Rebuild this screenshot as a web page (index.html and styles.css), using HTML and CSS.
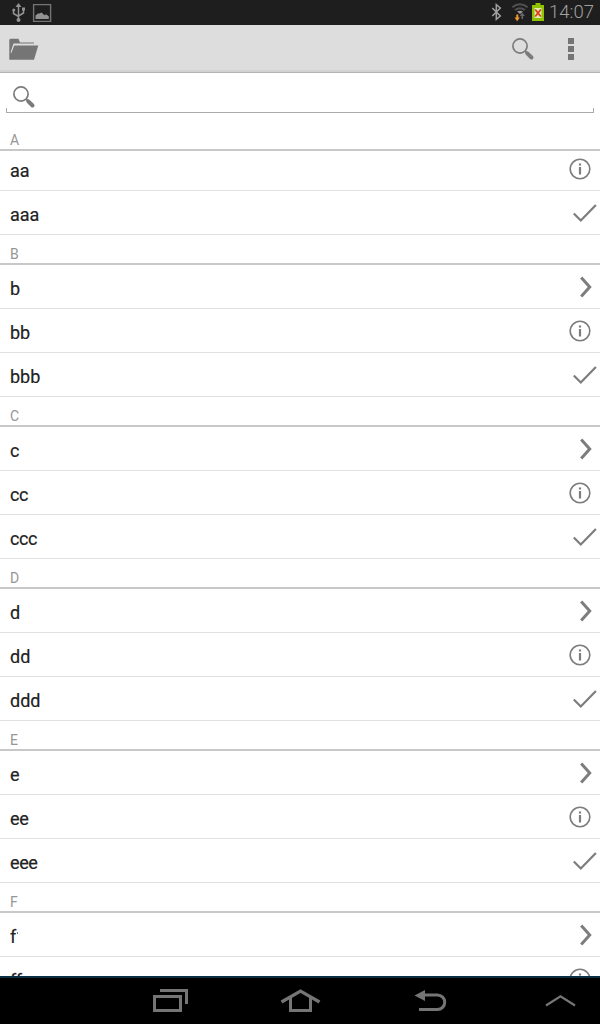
FILE: index.html
```
<!DOCTYPE html>
<html lang="en">
<head>
<meta charset="utf-8">
<title>Contacts list</title>
<link rel="stylesheet" href="styles.css">
</head>
<body>
<svg class="defs" width="0" height="0">
  <symbol id="search" viewBox="0 0 24 24">
    <circle cx="9" cy="9" r="7.1" fill="none" stroke="#7b7b7b" stroke-width="1.7"/>
    <path d="M14 14l2 2" stroke="#7b7b7b" stroke-width="2"/>
    <path d="M16.3 16.3l4.2 4.2" stroke="#7b7b7b" stroke-width="4" stroke-linecap="round"/>
  </symbol>
  <symbol id="info" viewBox="0 0 32 24">
    <circle cx="12" cy="11" r="9.8" fill="none" stroke="#7d7d7d" stroke-width="1.6"/>
    <path d="M12 5.4v2.2M12 9v7.4" stroke="#7d7d7d" stroke-width="2.2"/>
  </symbol>
  <symbol id="check" viewBox="0 0 32 24">
    <path d="M5.800 11.500l7 7L27.900 3" fill="none" stroke="#7d7d7d" stroke-width="2.200"/>
  </symbol>
  <symbol id="chevron" viewBox="0 0 32 24">
    <path d="M13.200 1.600L21.700 11l-8.500 9.500" fill="none" stroke="#7d7d7d" stroke-width="3"/>
  </symbol>
</svg>
<div class="screen">
  <header class="status">
    <svg class="status-left" width="60" height="25" viewBox="0 0 60 25" fill="none" stroke="#929292">
      <path d="M18.500 6v13M13.500 10v3.500l5 3M23.500 9v4l-5 3" stroke-width="1.500"/>
      <path d="M18.500 3l3 4h-6z" fill="#929292" stroke="none"/>
      <circle cx="18.500" cy="20" r="2" fill="#929292" stroke="none"/>
      <circle cx="13.800" cy="10" r="1.500" fill="#929292" stroke="none"/>
      <path d="M22 7.500h3v3h-3z" fill="#929292" stroke="none"/>
      <path d="M33.600 4.600h17v16.800h-17z" stroke="#747474" stroke-width="1.400"/>
      <path d="M35.500 19v-3.500l2.500-2h1.500l2-1 3 2.800 1.500-1 2.800 2V19z" fill="#929292" stroke="none"/>
    </svg>
    <svg class="status-right" width="60" height="25" viewBox="0 0 60 25" fill="none">
      <path d="M4.300 8l8 8-4 3.300V4.700l4 3.300-8 8" stroke="#a0a0a0" stroke-width="1.500"/>
      <path d="M24.300 7.200q7.700-5.700 15.400 0M27 10q5-3.600 10 0" stroke="#505050" stroke-width="2"/>
      <path d="M29 11.500q3-1.700 6 0L32 14z" fill="#999"/>
      <path d="M29.300 14.500V19" stroke="#f19a2c" stroke-width="2"/>
      <path d="M26.500 17.500h5.300L29.200 21.300z" fill="#f19a2c"/>
      <path d="M34.300 19v-4.500" stroke="#666" stroke-width="1.600"/>
      <path d="M31.700 16l2.600-3.500 2.600 3.500z" fill="#666"/>
      <path d="M44 5h3.500V3h5v2H56v16H44z" fill="#8fc200"/>
      <path d="M46.500 8h7v10h-7z" fill="#dfeab5"/>
      <path d="M47.200 9.500l5.600 7M52.800 9.500l-5.600 7" stroke="#e03a16" stroke-width="1.700"/>
    </svg>
    <span class="clock">14:07</span>
  </header>
  <div class="actionbar">
    <svg class="folder" width="30" height="24" viewBox="0 0 30 24">
      <path d="M.3 1.800L1.300.8h8.200l1.500 3.700H25v1H4.500L1.500 14.500l1 .3L5.300 7.500h24L25 21.700H.3z" fill="#757575"/>
    </svg>
    <svg class="find" width="24" height="24"><use href="#search"/></svg>
    <svg class="overflow" width="6" height="22" viewBox="0 0 6 22"><path d="M0 0h6v6H0zM0 8h6v6H0zM0 16h6v6H0z" fill="#757575"/></svg>
  </div>
  <div class="searchbox">
    <div class="field"><svg width="24" height="24"><use href="#search"/></svg></div>
  </div>
  <main class="list">
    <h2 class="section pinned">A</h2>
    <div class="row under"><span>aa</span><svg class="icon"><use href="#info"/></svg></div>
    <div class="row"><span>aaa</span><svg class="icon"><use href="#check"/></svg></div>
    <h2 class="section">B</h2>
    <div class="row"><span>b</span><svg class="icon"><use href="#chevron"/></svg></div>
    <div class="row"><span>bb</span><svg class="icon"><use href="#info"/></svg></div>
    <div class="row"><span>bbb</span><svg class="icon"><use href="#check"/></svg></div>
    <h2 class="section">C</h2>
    <div class="row"><span>c</span><svg class="icon"><use href="#chevron"/></svg></div>
    <div class="row"><span class="tight">cc</span><svg class="icon"><use href="#info"/></svg></div>
    <div class="row"><span class="tight">ccc</span><svg class="icon"><use href="#check"/></svg></div>
    <h2 class="section">D</h2>
    <div class="row"><span>d</span><svg class="icon"><use href="#chevron"/></svg></div>
    <div class="row"><span>dd</span><svg class="icon"><use href="#info"/></svg></div>
    <div class="row"><span>ddd</span><svg class="icon"><use href="#check"/></svg></div>
    <h2 class="section">E</h2>
    <div class="row"><span>e</span><svg class="icon"><use href="#chevron"/></svg></div>
    <div class="row"><span class="tight">ee</span><svg class="icon"><use href="#info"/></svg></div>
    <div class="row"><span class="tight">eee</span><svg class="icon"><use href="#check"/></svg></div>
    <h2 class="section">F</h2>
    <div class="row"><span class="ticked">f</span><svg class="icon"><use href="#chevron"/></svg></div>
    <div class="row"><span class="tight">ff</span><svg class="icon"><use href="#info"/></svg></div>
  </main>
  <nav class="navbar">
    <svg width="600" height="46" viewBox="0 0 600 46" fill="none" stroke="#757575">
      <path d="M160 12.500h26.500V26" stroke-width="3"/>
      <path d="M154.500 18.500h26v14h-26z" stroke-width="3"/>
      <path d="M281.500 24L300.500 13 319.500 24" stroke-width="3.200"/>
      <path d="M290.500 19v13.500h20V19" stroke-width="3"/>
      <path d="M423 17h14.500a7.200 7.200 0 0 1 0 14.500H419" stroke-width="3"/>
      <path d="M414.500 17.500L425 12v11z" fill="#757575" stroke="none"/>
      <path d="M546 27.500l14.500-9.200 14.500 9.200" stroke-width="2.200"/>
    </svg>
  </nav>
</div>
</body>
</html>
```
FILE: styles.css
```
* { box-sizing: border-box; }
body { margin: 0; background: #fff; font-family: Roboto, "Liberation Sans", sans-serif; }
svg { display: block; flex: none; }
.defs { position: absolute; }
.screen { width: 600px; height: 1024px; display: flex; flex-direction: column; overflow: hidden; }
.status { flex: none; height: 25px; background: #1e1e1e; display: flex; align-items: center; }
.status-right { margin-left: auto; }
.clock { width: 52px; padding-left: 1px; font-size: 18.5px; line-height: 25px; color: #a0a0a0; font-weight: 300; }
.actionbar { flex: none; height: 48px; background: #ddd; border-bottom: 1px solid #b3b3b3; box-shadow: inset 0 -2px 0 #d2d2d2; display: flex; align-items: flex-start; padding: 13px 26px 0 9px; }
.find { margin-left: auto; margin-right: 33px; margin-top: -1px; }
.searchbox { flex: none; height: 48px; padding: 8px 6px; }
.field { height: 32px; padding: 4px 0 0 6px; background: linear-gradient(#aaa, #aaa) 0 100% / 1px 4px no-repeat, linear-gradient(#aaa, #aaa) 100% 100% / 1px 4px no-repeat; border-bottom: 1px solid #aaa; }
.list { flex: 1; min-height: 0; overflow: hidden; }
.section { margin: 0; height: 30px; padding: 9px 10px 0; border-bottom: 2px solid #c8c8c8; background: #fff; color: #969696; font-size: 14px; line-height: 20px; font-weight: 400; }
.pinned { position: relative; z-index: 1; }
.row { height: 44px; border-bottom: 1px solid #e0e0e0; display: flex; align-items: flex-start; justify-content: space-between; padding: 11px 0 0 10px; color: #222; font-size: 18px; line-height: 25px; -webkit-text-stroke: 0.2px #222; }
.under { margin-top: -4px; }
.tight { letter-spacing: -0.4px; }
.icon { width: 32px; height: 24px; }
.ticked { position: relative; }
.ticked::after { content: ""; position: absolute; left: 7px; top: 8px; width: 1px; height: 2px; background: #777; }
.navbar { flex: none; height: 48px; background: #000; border-top: 2px solid #082f42; }
```
